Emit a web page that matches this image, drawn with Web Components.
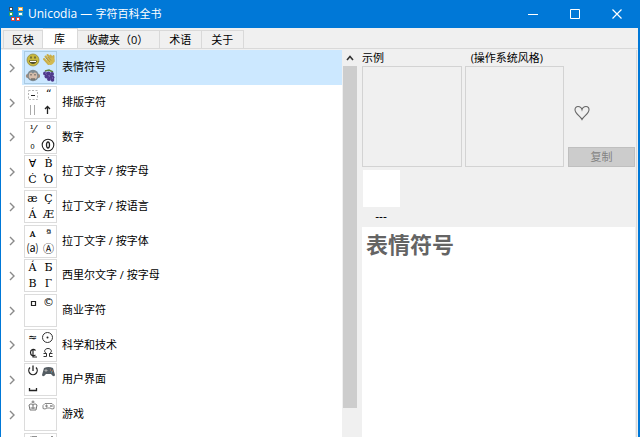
<!DOCTYPE html>
<html lang="zh-CN">
<head>
<meta charset="utf-8">
<title>Unicodia — 字符百科全书</title>
<style>
  html, body { margin: 0; height: 100%; overflow: hidden; }
  body { font: 11px/16px "Open Sans", "Noto Sans CJK SC", sans-serif; color: #000; }
</style>
</head>
<body>
<app-window></app-window>

<script>
const define = (name, html, setup) => {
  const template = document.createElement('template');
  template.innerHTML = html;
  customElements.define(name, class extends HTMLElement {
    constructor() {
      super();
      this.attachShadow({ mode: 'open' }).append(template.content.cloneNode(true));
    }
    connectedCallback() { if (setup) setup(this, this.shadowRoot); }
  });
};

define('title-bar', `
<style>
  :host { display: flex; align-items: center; height: 28px; background: #0078d7; color: #fff; }
  .logo { width: 14px; height: 14px; margin: 0 5px 0 8px; flex: none; }
  h1 { flex: 1; margin: 0; font: 11px/16px "Open Sans", "Noto Sans CJK SC", sans-serif; white-space: pre; }
  ::slotted(.latin) { font-size: 12px; }
  button { width: 42px; height: 28px; padding: 0; border: 0; background: none; color: inherit; display: grid; place-items: center; }
  svg { display: block; }
</style>
<svg class="logo" viewBox="0 0 14 14" aria-hidden="true">
  <path fill="#3d4d5c" d="M0 0h4v4H0z"/><path fill="#3aa655" d="M0 5h4v4H0z"/>
  <path fill="#e8a94a" d="M9 0h5v4H9z"/><path fill="#38a5b8" d="M9 5h5v4H9z"/>
  <path fill="#d9433b" d="M2 10h4v4H2zM7 10h4v4H7z"/>
  <path fill="#fff" d="M1 1h2v2H1zM1 6h2v2H1zM10 1h3v2h-3zM10 6h3v2h-3zM3 11h2v2H3zM8 11h2v2H8z"/>
</svg>
<h1><slot></slot></h1>
<button aria-label="最小化"><svg width="10" height="10"><path d="M0 5.500h10" stroke="#fff"/></svg></button>
<button aria-label="最大化"><svg width="10" height="10"><path d="M.5.5h9v9h-9z" fill="none" stroke="#fff"/></svg></button>
<button aria-label="关闭"><svg width="10" height="10"><path d="M.5.5l9 9M9.500.5l-9 9" stroke="#fff" stroke-width="1.200"/></svg></button>
`);

define('tab-item', `
<style>
  :host { display: flex; }
  button { font: inherit; line-height: 16px; padding: 1px 10px 0 9px; height: 18px; border: solid #d9d9d9; border-width: 1px 1px 0 0; background: #f0f0f0; color: #000; white-space: pre; }
  :host(:first-child) button { border-left-width: 1px; padding: 1px 8px 0; }
  :host([selected]) button { height: 20px; padding: 0 12px 0 11px; background: #fff; }
  :host([wide]) button { padding: 1px 11px 0 9px; }
</style>
<button role="tab"><slot></slot></button>`, (host, root) => {
  root.querySelector('button').setAttribute('aria-selected', host.hasAttribute('selected'));
});

define('tab-strip', `
<style>
  :host { display: flex; align-items: flex-end; height: 21px; padding-left: 2px; background: #f0f0f0; border-bottom: 1px solid #d9d9d9; box-sizing: border-box; }
</style>
<slot></slot>`, host => host.setAttribute('role', 'tablist'));

define('glyph-tile', `
<style>
  :host { display: grid; grid-template: 15px 15px / 15px 15px; gap: 1px; width: 31px; height: 31px; border: 1px solid #dcdcdc; background: #fff; flex: none; font: 11px/15px "DejaVu Serif", "DejaVu Sans", sans-serif; color: #000; overflow: hidden; }
  ::slotted(*) { display: grid; place-items: center; width: 15px; height: 15px; text-align: center; white-space: nowrap; }
  ::slotted(.sans) { font-family: "DejaVu Sans", sans-serif; }
  ::slotted(.big) { font-size: 13px; }
</style>
<slot></slot>`);

define('tree-item', `
<style>
  :host { display: flex; align-items: center; height: 35px; }
  :host(:nth-child(3n)) { height: 34px; }
  button { width: 21px; height: 100%; flex: none; border: 0; padding: 0; background: none; display: grid; place-items: center; }
  .row { flex: 1; min-width: 0; height: 100%; display: flex; align-items: flex-start; padding: 1px 0 0 2px; gap: 5px; box-sizing: border-box; }
  .label { line-height: 32px; white-space: nowrap; }
  :host([selected]) .row { background: #cce8ff; }
  ::slotted(glyph-tile) { flex: none; }
  :host([selected]) ::slotted(glyph-tile) { background: #cce8ff; border-color: #aacbe3; }
</style>
<button aria-label="展开"><svg width="6" height="10"><path d="M1 1l4 4-4 4" fill="none" stroke="#8a8a8a" stroke-width="1.400"/></svg></button>
<div class="row"><slot name="icon"></slot><span class="label"><slot></slot></span></div>`,
host => host.setAttribute('role', 'treeitem'));

define('scroll-bar', `
<style>
  :host { display: flex; flex-direction: column; width: 15px; background: #f0f0f0; flex: none; }
  button { height: 16px; border: 0; padding: 0; background: none; display: grid; place-items: center; flex: none; }
  .thumb { height: 88.400%; margin: 0 0 0 1px; background: #cdcdcd; }
</style>
<button aria-label="向上滚动"><svg width="8" height="6"><path d="M1 5l3-3.500L7 5" fill="none" stroke="#333" stroke-width="1.600"/></svg></button>
<div class="thumb"></div>`);

define('tree-view', `
<style>
  :host { display: flex; min-width: 0; min-height: 0; background: #fff; }
  .items { flex: 1; min-width: 0; overflow: hidden; }
</style>
<div class="items" role="tree"><slot></slot></div><scroll-bar></scroll-bar>`);

define('sample-box', `
<style>
  :host { display: flex; flex-direction: column; min-width: 0; }
  .caption { height: 16px; line-height: 16px; white-space: nowrap; }
  :host([indent]) .caption { padding-left: 6px; }
  .frame { height: 99px; border: 1px solid #d3d3d3; }
</style>
<div class="caption"><slot></slot></div><div class="frame"></div>`);

define('detail-pane', `
<style>
  :host { display: flex; flex-direction: column; min-width: 0; min-height: 0; padding: 0 1px 0 5px; background: #f0f0f0; border-right: 1px solid #d9d9d9; }
  .samples { display: grid; grid-template-columns: minmax(0, 100fr) minmax(0, 100fr) minmax(0, 68fr); gap: 3px; }
  .actions { display: flex; flex-direction: column; justify-content: flex-end; gap: 26px; padding-left: 1px; }
  button { font: inherit; }
  .heart { width: 16px; height: 16px; margin-left: 6px; padding: 0; border: 0; background: none; }
  .copy { height: 20px; border: 1px solid #bfbfbf; background: #cccccc; color: #838383; padding: 0; line-height: 16px; }
  .swatch { width: 37px; height: 37px; margin: 3px 0 0 1px; background: #fff; }
  .code { width: 38px; height: 20px; line-height: 20px; text-align: center; font-size: 12px; }
  article { flex: 1; min-height: 0; background: #fff; padding: 0 4px; }
  h2 { margin: 0; font-size: 22px; line-height: 34px; font-weight: 700; color: #646464; }
</style>
<div class="samples">
  <sample-box>示例</sample-box>
  <sample-box indent>(操作系统风格)</sample-box>
  <div class="actions">
    <button class="heart" aria-label="收藏"><svg width="16" height="16" viewBox="0 0 16 16"><path d="M8 14.500C6.500 11.500 1 8.500 1 4.700C1 2.700 2.300 1.500 4 1.500C6 1.500 7.500 2.800 8 4.700C8.500 2.800 10 1.500 12 1.500C13.700 1.500 15 2.700 15 4.700C15 8.500 9.500 11.500 8 14.500Z" fill="none" stroke="#666" stroke-width="1.100"/></svg></button>
    <button class="copy" disabled>复制</button>
  </div>
</div>
<div class="swatch"></div>
<div class="code">---</div>
<article><h2><slot></slot></h2></article>`);

define('app-window', `
<style>
  :host { display: flex; flex-direction: column; height: 100vh; box-sizing: border-box; border: solid #0078d7; border-width: 0 2px 0 1px; background: #f0f0f0; overflow: hidden; }
  main { flex: 1; min-height: 0; display: grid; grid-template: minmax(0, 1fr) / minmax(0, 356fr) minmax(0, 280fr); padding: 1px 1px 0 0; }
  svg { display: block; width: 15px; height: 15px; }
</style>
<title-bar><span class="latin">Unicodia — </span>字符百科全书</title-bar>
<tab-strip>
  <tab-item>区块</tab-item><tab-item selected>库</tab-item><tab-item wide>收藏夹（0）</tab-item><tab-item>术语</tab-item><tab-item>关于</tab-item>
</tab-strip>
<main>
<tree-view>
  <tree-item selected><glyph-tile slot="icon">
    <svg viewBox="0 0 15 15"><circle cx="8" cy="8" r="6" fill="#c9b83e" stroke="#8e8738" stroke-width=".7"/><path d="M4 8.500h8c-.5 4.500-7.500 4.500-8 0z" fill="#4b4b33"/><path d="M5 9h6v1H5z" fill="#fff"/><path d="M6 4.500v2M10 4.500v2" stroke="#4b4b33" stroke-width="1.300"/></svg>
    <svg viewBox="0 0 15 15"><path d="M3 7l4.500 5M4.500 4.500l5 5.500M6.500 3l4.500 5M9.500 3.500l3 4V4" stroke="#c9ad48" stroke-width="2" stroke-linecap="round" fill="none"/><path d="M5.500 8l6.500-3 1.500 3c0 4-4 6-6 4.500z" fill="#d3b950"/><path d="M5 6l4 4M7 5l3 3.500" stroke="#99803a" stroke-width=".6"/></svg>
    <svg viewBox="0 0 15 15"><circle cx="2.800" cy="8" r="2" fill="#a48b7a"/><circle cx="13.200" cy="8" r="2" fill="#a48b7a"/><circle cx="8" cy="7.500" r="5.700" fill="#7f8b91"/><path d="M4 7c0-3 3-3 4-1 1-2 4-2 4 1 2 6-10 6-8 0z" fill="#d6bdaa"/><path d="M6 6v1.500M10 6v1.500M6 11h4" stroke="#4c4c4c"/></svg>
    <svg viewBox="0 0 15 15"><path d="M4 3l4-1 4 2" stroke="#5d823c" stroke-width="1.500" fill="none"/><g fill="#4f3a8c"><circle cx="4" cy="5.500" r="2"/><circle cx="7.500" cy="5.500" r="2"/><circle cx="11" cy="6" r="2"/><circle cx="5.500" cy="8.500" r="2"/><circle cx="9" cy="8.500" r="2"/><circle cx="11.500" cy="9.500" r="2"/><circle cx="8" cy="11" r="2"/><circle cx="11.500" cy="12" r="1.800"/></g><path d="M4 5h1M8 8h1M11 10h1" stroke="#8f78c4"/></svg>
  </glyph-tile>表情符号</tree-item>
  <tree-item><glyph-tile slot="icon">
    <svg viewBox="0 0 15 15"><path d="M3.500 3.500h9v9h-9z" fill="none" stroke="#b5b5b5" stroke-dasharray="2 1.500"/><path d="M6 8.500h4" stroke="#222"/></svg>
    <span>“</span>
    <svg viewBox="0 0 15 15"><path d="M5.500 2v10M9.500 2v10" stroke="#aaa"/></svg>
    <svg viewBox="0 0 15 15"><path d="M6.500 11V3.500M4 6l2.500-2.500L9 6" fill="none" stroke="#222" stroke-width="1.300"/></svg>
  </glyph-tile>排版字符</tree-item>
  <tree-item><glyph-tile slot="icon">
    <span>⅟</span><span class="sans">⁰</span><span class="sans">₀</span>
    <svg viewBox="0 0 15 15"><circle cx="7" cy="7" r="5.800" fill="none" stroke="#222" stroke-width="1.100"/><ellipse cx="7" cy="7" rx="1.500" ry="3" fill="none" stroke="#222" stroke-width="1.300"/></svg>
  </glyph-tile>数字</tree-item>
  <tree-item><glyph-tile slot="icon"><span class="sans">Ɐ</span><span>Ḃ</span><span>Ċ</span><span>Ὁ</span></glyph-tile>拉丁文字 / 按字母</tree-item>
  <tree-item><glyph-tile slot="icon"><span>æ</span><span>Ç</span><span>Á</span><span>Æ</span></glyph-tile>拉丁文字 / 按语言</tree-item>
  <tree-item><glyph-tile slot="icon"><span>ᴀ</span><span>ª</span><span class="sans">⒜</span><span class="sans">Ⓐ</span></glyph-tile>拉丁文字 / 按字体</tree-item>
  <tree-item><glyph-tile slot="icon"><span>Á</span><span>Б</span><span>В</span><span>Г</span></glyph-tile>西里尔文字 / 按字母</tree-item>
  <tree-item><glyph-tile slot="icon">
    <svg viewBox="0 0 15 15"><path d="M6.500 6.500h4v4h-4z" fill="none" stroke="#222" stroke-width="1.200"/></svg><span class="sans">©</span>
  </glyph-tile>商业字符</tree-item>
  <tree-item><glyph-tile slot="icon">
    <span class="sans">≈</span>
    <svg viewBox="0 0 15 15"><circle cx="6.500" cy="7.500" r="5" fill="none" stroke="#333"/><circle cx="6.500" cy="7.500" r="1" fill="#222"/></svg>
    <svg viewBox="0 0 15 15"><path d="M10.500 4.500C8.500 2.500 5.500 3.500 5.500 6.500s2.500 4 5 2.500M8 3v8h4" fill="none" stroke="#222" stroke-width="1.200"/></svg>
    <svg viewBox="0 0 15 15"><path d="M2.500 7.500h3C2 5.500 4 2.500 7 2.500s5 3 1.500 5h3M2.500 10.500h3v-3M11.500 10.500h-3v-3" fill="none" stroke="#333"/></svg>
  </glyph-tile>科学和技术</tree-item>
  <tree-item><glyph-tile slot="icon">
    <svg viewBox="0 0 15 15"><path d="M5 3.500a4.200 4.200 0 1 0 6 0M8 1.500V7" fill="none" stroke="#222" stroke-width="1.300"/></svg>
    <svg viewBox="0 0 15 15"><path d="M3 4q4.500-2 9 0l2 7q-1 3-4-1H5q-3 4-4 1z" fill="#555d63"/><path d="M3.500 6.500h3M5 5v3" stroke="#aaa"/><path d="M9 6h1M11 7h1" stroke="#e08558" stroke-width="1.200"/><path d="M10 8h1" stroke="#5ab3ce"/></svg>
    <svg viewBox="0 0 15 15"><path d="M4.500 8v2.500h7V8" fill="none" stroke="#222" stroke-width="1.300"/></svg>
  </glyph-tile>用户界面</tree-item>
  <tree-item><glyph-tile slot="icon">
    <svg viewBox="0 0 15 15"><path d="M8 1.500v3M6.500 3h3M5 11L4 6q2-2.500 4 0 2-2.500 4 0l-1 5zM8 6v4M5.500 9h5" fill="none" stroke="#777"/></svg>
    <svg viewBox="0 0 15 15"><path d="M4 4.500h7l2 2v3l-2 .5-2-1H6l-2 1-2-.5v-3zM4 7h3M5.500 5.500v3M10 6v2M12 7H9" fill="none" stroke="#888"/></svg>
  </glyph-tile>游戏</tree-item>
  <tree-item><glyph-tile slot="icon">
    <svg viewBox="0 0 15 15"><path d="M4 4.500l2-2M7 3h5M8 3v6" stroke="#222" fill="none"/></svg>
    <svg viewBox="0 0 15 15"><path d="M3 3.500h5M10 3h2v6" stroke="#222" fill="none"/></svg>
  </glyph-tile></tree-item>
</tree-view>
<detail-pane>表情符号</detail-pane>
</main>`);
</script>
</body>
</html>
